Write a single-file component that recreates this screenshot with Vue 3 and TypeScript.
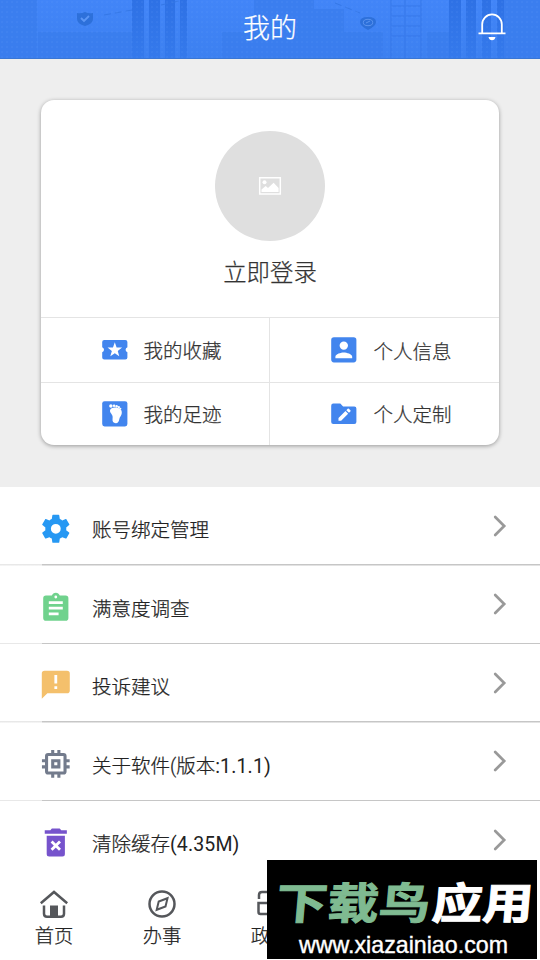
<script setup lang="ts">
interface Item {
  label: string
  icon: string
  color: string
  detail?: string
}

const shortcuts: Item[] = [
  { label: '我的收藏', icon: 'ticket', color: '#4285ee' },
  { label: '个人信息', icon: 'person', color: '#4285ee' },
  { label: '我的足迹', icon: 'foot', color: '#4285ee' },
  { label: '个人定制', icon: 'folder', color: '#4285ee' },
]

const rows: Item[] = [
  { label: '账号绑定管理', icon: 'gear', color: '#2698f3' },
  { label: '满意度调查', icon: 'clipboard', color: '#70d28d' },
  { label: '投诉建议', icon: 'feedback', color: '#f4c06c' },
  { label: '关于软件(版本', icon: 'chip', color: '#737b8c', detail: ':1.1.1)' },
  { label: '清除缓存', icon: 'trash', color: '#7653cc', detail: '(4.35M)' },
]

const dots = [[10, 5.2, 1.25], [12.3, 5.1, .9], [14.1, 5.4, .85], [15.7, 6.1, .8], [16.8, 7.1, .7]]
const tabs = ['首页', '办事', '政']
</script>

<template>
  <main class="screen">
    <header class="header">
      <svg class="skyline" viewBox="0 0 540 59" aria-hidden="true">
        <defs>
          <linearGradient id="sky" x1="0" y1="0" x2="0" y2="1">
            <stop offset="0" stop-color="#4285f8" />
            <stop offset="1" stop-color="#3c80f0" />
          </linearGradient>
          <linearGradient id="tower" x1="0" y1="0" x2="0" y2="1">
            <stop offset="0" stop-color="#296ce0" />
            <stop offset="1" stop-color="#3378eb" />
          </linearGradient>
          <pattern id="dots" width="5" height="5" patternUnits="userSpaceOnUse">
            <circle cx="2" cy="2" r=".7" fill="#6ba0fa" opacity=".3" />
          </pattern>
        </defs>
        <path fill="url(#sky)" d="M0 0h540v59H0z" />
        <path fill="#397cec" d="M0 0h37v59H0zM38 32h94v27H38zM222 32h32V0h60v9h30v23h39v27H222zM427 32h23v27h-23zM504 0h36v59h-36z" opacity=".75" />
        <path fill="url(#tower)" d="M132 0h12v59h-12zM149 0h11v59h-11zM165 0h10v59h-10zM180 0h7v59h-7zM449 0h12v59h-12zM466 0h10v59h-10zM482 0h9v59h-9zM497 0h7v59h-7z" opacity=".8" />
        <path stroke="#3578ea" stroke-width="1.5" fill="none" d="M391 0v59M405 0v59M421 0v59M391 6h30M391 16h30M391 26h30M391 36h30" opacity=".65" />
        <path stroke="#3578e7" stroke-dasharray="7 4" fill="none" d="M104 15L132 10M161 5l18-4M335 3l25 10" />
        <path fill="url(#dots)" d="M0 0h540v59H0z" />
        <path fill="#2d70da" d="M77 13q4 1 8-1 4 2 8 1v6q0 5-8 7-8-2-8-7z" />
        <path d="M81 18l3 3 5-5" fill="none" stroke="#5c97f6" stroke-width="1.8" />
        <path fill="#2d70da" d="M368 30q-8-4-8-8 0-5 8-5t8 5q0 4-8 8" />
        <ellipse cx="368" cy="22.5" rx="4.7" ry="3.2" fill="none" stroke="#5b94ef" />
        <path d="M366 23l4-2" stroke="#5b94ef" />
        <path fill="#3976d5" d="M0 58h540v1H0z" />
      </svg>
      <h1 class="title">我的</h1>
      <svg class="bell" viewBox="0 0 30 30" aria-hidden="true">
        <path d="M5.2 22V13.200a9.800 9.800 0 0 1 19.600 0V22M1.500 22.400h27" fill="none" stroke="#fff" stroke-width="1.8" />
        <path d="M11.500 26h7q-.8 3.200-3.500 3.200t-3.500-3.200" fill="#fff" />
      </svg>
    </header>

    <section class="profile">
      <div class="card">
        <div class="login">
          <div class="avatar">
            <svg viewBox="0 0 24 20" aria-hidden="true">
              <path d="M1.700 1.700h20.600v16.200H1.700z" fill="none" stroke="#fff" stroke-width="1.500" />
              <circle cx="6.500" cy="6.200" r="2" fill="#fff" />
              <path d="M3.500 16v-2.600l4.200-3.300 2.300 2 5.600-5.300 5 5.200v4z" fill="#fff" />
            </svg>
          </div>
          <span class="login-text">立即登录</span>
        </div>
        <div class="shortcuts">
          <div v-for="s in shortcuts" :key="s.label" class="shortcut" :class="s.icon">
            <svg class="icon" viewBox="0 0 24 24" :fill="s.color" aria-hidden="true">
              <template v-if="s.icon === 'ticket'">
                <path d="M4.500 5h15Q21 5 21 6.500v3.700a1.900 1.900 0 0 0 0 3.600v3.700q0 1.500-1.500 1.500h-15Q3 19 3 17.500v-3.700a1.900 1.900 0 0 0 0-3.600V6.500Q3 5 4.500 5" />
                <path fill="#fff" d="M12 6.600l1.300 3.700 3.900.1-3.100 2.400 1.100 3.800-3.200-2.200-3.200 2.200 1.100-3.800-3.100-2.400 3.900-.1z" />
              </template>
              <path v-else-if="s.icon === 'person'" d="M3 5v14a2 2 0 0 0 2 2h14a2 2 0 0 0 2-2V5a2 2 0 0 0-2-2H5a2 2 0 0 0-2 2zm12 4a3 3 0 1 1-6 0 3 3 0 0 1 6 0zm-9 8c0-2 4-3.100 6-3.100s6 1.100 6 3.100v1H6z" />
              <template v-else-if="s.icon === 'foot'">
                <rect x="3" y="3" width="18" height="18" rx="1.700" />
                <path fill="#fff" d="M8.600 9.400c.4-1.700 2.300-2.200 4.500-1.900 2.600.4 4.100 1.600 3.900 3.900-.1 1.900-1.500 2.700-1.800 4.500-.2 1.700-.9 2.800-2.500 2.800-1.800 0-2.600-1.200-2.300-3.100.3-2-.2-2.600-1-3.800-.6-.7-.9-1.500-.8-2.400" />
                <circle v-for="(d, i) in dots" :key="i" :cx="d[0]" :cy="d[1]" :r="d[2]" transform="translate(-.8 1.200)" fill="#fff" />
              </template>
              <template v-else>
                <path d="M4.500 4.700h5l2 2h8q1.500 0 1.500 1.500v9.600q0 1.500-1.500 1.500h-15Q3 19.300 3 17.800V6.200q0-1.500 1.500-1.500" />
                <path fill="#fff" d="M8.200 15v1.900h1.900l5-5-1.900-1.900zM13.800 9.400l1-1q.4-.4.8 0l1.100 1.100q.4.400 0 .8l-1 1z" />
              </template>
            </svg>
            <span>{{ s.label }}</span>
          </div>
        </div>
      </div>
    </section>

    <section class="list">
      <div v-for="r in rows" :key="r.label" class="row">
        <svg class="icon" viewBox="0 0 24 24" :fill="r.color" aria-hidden="true">
          <path v-if="r.icon === 'gear'" d="M19.430 12.980c.04-.32.07-.64.07-.98s-.03-.66-.07-.98l2.110-1.650c.19-.15.24-.42.12-.64l-2-3.460c-.12-.22-.39-.3-.61-.22l-2.490 1c-.52-.4-1.080-.73-1.690-.98l-.38-2.650A.49.49 0 0 0 14 2h-4c-.25 0-.46.18-.49.42l-.38 2.650c-.61.25-1.170.59-1.690.98l-2.490-1c-.23-.09-.49 0-.61.22l-2 3.460c-.13.22-.07.49.12.64l2.110 1.650c-.04.32-.07.65-.07.98s.03.66.07.98l-2.110 1.650c-.19.15-.24.42-.12.64l2 3.460c.12.22.39.3.61.22l2.490-1c.52.4 1.080.73 1.690.98l.38 2.650c.03.24.24.42.49.42h4c.25 0 .46-.18.49-.42l.38-2.650c.61-.25 1.170-.59 1.690-.98l2.490 1c.23.09.49 0 .61-.22l2-3.460c.12-.22.07-.49-.12-.64zM12 15.500a3.500 3.500 0 1 1 0-7 3.500 3.500 0 0 1 0 7z" />
          <path v-else-if="r.icon === 'clipboard'" d="M19 3h-4.180C14.400 1.840 13.300 1 12 1s-2.400.84-2.820 2H5a2 2 0 0 0-2 2v14a2 2 0 0 0 2 2h14a2 2 0 0 0 2-2V5a2 2 0 0 0-2-2zm-7 0a1 1 0 1 1 0 2 1 1 0 0 1 0-2zm2 14H7v-2h7zm3-4H7v-2h10zm0-4H7V7h10z" transform="translate(0 1)" />
          <path v-else-if="r.icon === 'feedback'" transform="translate(0 -.7)" d="M20 2H4a2 2 0 0 0-2 2v18l4-4h14a2 2 0 0 0 2-2V4a2 2 0 0 0-2-2zm-7 13h-2v-2h2zm0-4h-2v-6h2z" />
          <path v-else-if="r.icon === 'chip'" transform="matrix(1.100 0 0 1.100 -1.200 -1.200)" d="M15 9H9v6h6zm-2 4h-2v-2h2zm8-2V9h-2V7a2 2 0 0 0-2-2h-2V3h-2v2h-2V3H9v2H7a2 2 0 0 0-2 2v2H3v2h2v2H3v2h2v2a2 2 0 0 0 2 2h2v2h2v-2h2v2h2v-2h2a2 2 0 0 0 2-2v-2h2v-2h-2v-2zm-4 6H7V7h10z" />
          <template v-else>
            <path d="M5.500 7h13v13q0 1.800-1.800 1.800H7.300Q5.500 21.800 5.500 20zM4.100 3.100h4l1.100-1.300h5.600l1.100 1.300h4v2.500H4.100z" />
            <path d="M9 11l6 6M15 11l-6 6" stroke="#fff" stroke-width="2" />
          </template>
        </svg>
        <span class="row-label">{{ r.label }}<span v-if="r.detail" class="detail">{{ r.detail }}</span></span>
        <svg class="chevron" viewBox="0 0 14 22" aria-hidden="true">
          <path d="M2.200 2l9 9-9 9" fill="none" stroke="#999" stroke-width="2.700" stroke-linecap="round" />
        </svg>
      </div>
    </section>

    <nav class="tabs">
      <div v-for="(t, i) in tabs" :key="t" class="tab">
        <svg viewBox="0 0 30 30" fill="none" stroke="#55575b" stroke-width="2.500" aria-hidden="true">
          <template v-if="i === 0">
            <path d="M1.800 14.200L15 3l13.200 11.200M5 16.500v8.200q0 3 3 3h14q3 0 3-3v-8.200" />
            <path fill="#55575b" stroke="none" d="M11 16.500h8V28h-8z" />
          </template>
          <template v-else-if="i === 1">
            <circle cx="15" cy="15" r="12.500" />
            <path stroke-width="2" d="M20.500 9.200l-2 8.300-8.800 3.300 2-8.300z" />
          </template>
          <path v-else d="M4 10V6q0-3 3-3h16q3 0 3 3v4M3.500 14h23v9q0 2-2 2h-19q-2 0-2-2z" />
        </svg>
        <span>{{ t }}</span>
      </div>
    </nav>

    <aside class="watermark">
      <svg viewBox="0 0 270 99">
        <g class="brand" transform="translate(8 59) skewX(-5)">
          <text x="0" y="0" textLength="154" lengthAdjust="spacingAndGlyphs" fill="#7fba91" stroke="#7fba91">下载鸟</text>
          <text x="156" y="0" textLength="101" lengthAdjust="spacingAndGlyphs" fill="#fff" stroke="#fff">应用</text>
        </g>
        <text class="site" x="32" y="93" textLength="209" lengthAdjust="spacingAndGlyphs">www.xiazainiao.com</text>
      </svg>
    </aside>
  </main>
</template>

<style>
body {
  margin: 0;
  background: #fff;
}
</style>

<style scoped>
.screen {
  position: relative;
  width: 540px;
  height: 960px;
  overflow: hidden;
  display: flex;
  flex-direction: column;
  background: #fff;
  color: #333;
  font-family: Roboto, "Noto Sans CJK SC", sans-serif;
  font-weight: 300;
  -webkit-text-stroke: .25px currentColor;
}
svg {
  display: block;
  flex: none;
}
.header {
  position: relative;
  flex: none;
  height: 59px;
  display: flex;
  justify-content: center;
}
.skyline {
  position: absolute;
  inset: 0;
  width: 540px;
  height: 59px;
}
.title {
  position: relative;
  margin: 0;
  color: #fff;
  font-size: 27px;
  line-height: 59px;
  font-weight: 300;
}
.bell {
  position: absolute;
  left: 477px;
  top: 11px;
  width: 30px;
  height: 30px;
}
.profile {
  flex: none;
  box-sizing: border-box;
  height: 428px;
  padding: 41px 41px 0;
  background: #eee;
}
.card {
  height: 345px;
  border-radius: 13px;
  overflow: hidden;
  background: #fff;
  box-shadow: 0 1px 4px rgba(0, 0, 0, .36);
}
.login {
  box-sizing: border-box;
  height: 217px;
  padding-top: 30.500px;
  display: flex;
  flex-direction: column;
  align-items: center;
}
.avatar {
  width: 110px;
  height: 110px;
  border-radius: 50%;
  background: #dfdfdf;
  display: flex;
  align-items: center;
  justify-content: center;
}
.avatar svg {
  width: 24px;
  height: 20px;
}
.login-text {
  margin-top: 15.500px;
  font-size: 23.400px;
  line-height: 34px;
}
.shortcuts {
  display: grid;
  grid-template-columns: 229px 229px;
  grid-template-rows: 65px 63px;
}
.shortcut {
  box-sizing: border-box;
  display: flex;
  align-items: center;
  gap: 12px;
  padding-left: 57px;
  border-top: 1px solid #e4e4e4;
  font-size: 19.500px;
}
.shortcut span {
  padding-bottom: 1px;
}
.shortcut.ticket span {
  padding-bottom: 2px;
}
.shortcut.person span {
  padding: 1px 0 0 1px;
}
.shortcut.folder span {
  padding-left: 1px;
}
.shortcut:nth-child(odd) {
  border-right: 1px solid #e4e4e4;
}
.icon {
  width: 33.600px;
  height: 33.600px;
}
.list {
  flex: none;
}
.row {
  box-sizing: border-box;
  height: 78.500px;
  padding: 5px 33px 0 39px;
  display: flex;
  align-items: center;
  background: linear-gradient(90deg, #e8e8e8 42px, #c6c6c6 42px) left bottom / 100% 1.500px no-repeat;
}
.row:last-child {
  background: none;
}
.row-label {
  flex: 1;
  margin-left: 19.400px;
  font-size: 19.500px;
  color: #222;
}
.detail {
  font-weight: 400;
  letter-spacing: .15px;
  -webkit-text-stroke-width: 0;
}
.chevron {
  width: 14px;
  height: 22px;
  margin-top: -6px;
}
.tabs {
  flex: none;
  display: grid;
  grid-template-columns: repeat(3, 108px);
}
.tab {
  padding-top: 9px;
  display: flex;
  flex-direction: column;
  align-items: center;
  font-size: 19.300px;
  line-height: 28px;
  color: #222;
}
.tab svg {
  width: 30px;
  height: 30px;
  margin-bottom: 4.500px;
}
.tab:last-child span {
  padding-right: 19px;
}
.watermark {
  position: absolute;
  left: 267px;
  top: 860px;
  width: 270px;
  height: 99px;
  background: #000;
  -webkit-text-stroke-width: 0;
}
.watermark svg {
  width: 270px;
  height: 99px;
}
.brand {
  font-family: "Noto Sans CJK SC", sans-serif;
  font-size: 43px;
  font-weight: 700;
  -webkit-text-stroke-width: 1.200px;
}
.site {
  font-family: "Liberation Sans", sans-serif;
  font-size: 24px;
  font-weight: 400;
  fill: #fff;
  stroke: #fff;
  stroke-width: .4px;
}
</style>
